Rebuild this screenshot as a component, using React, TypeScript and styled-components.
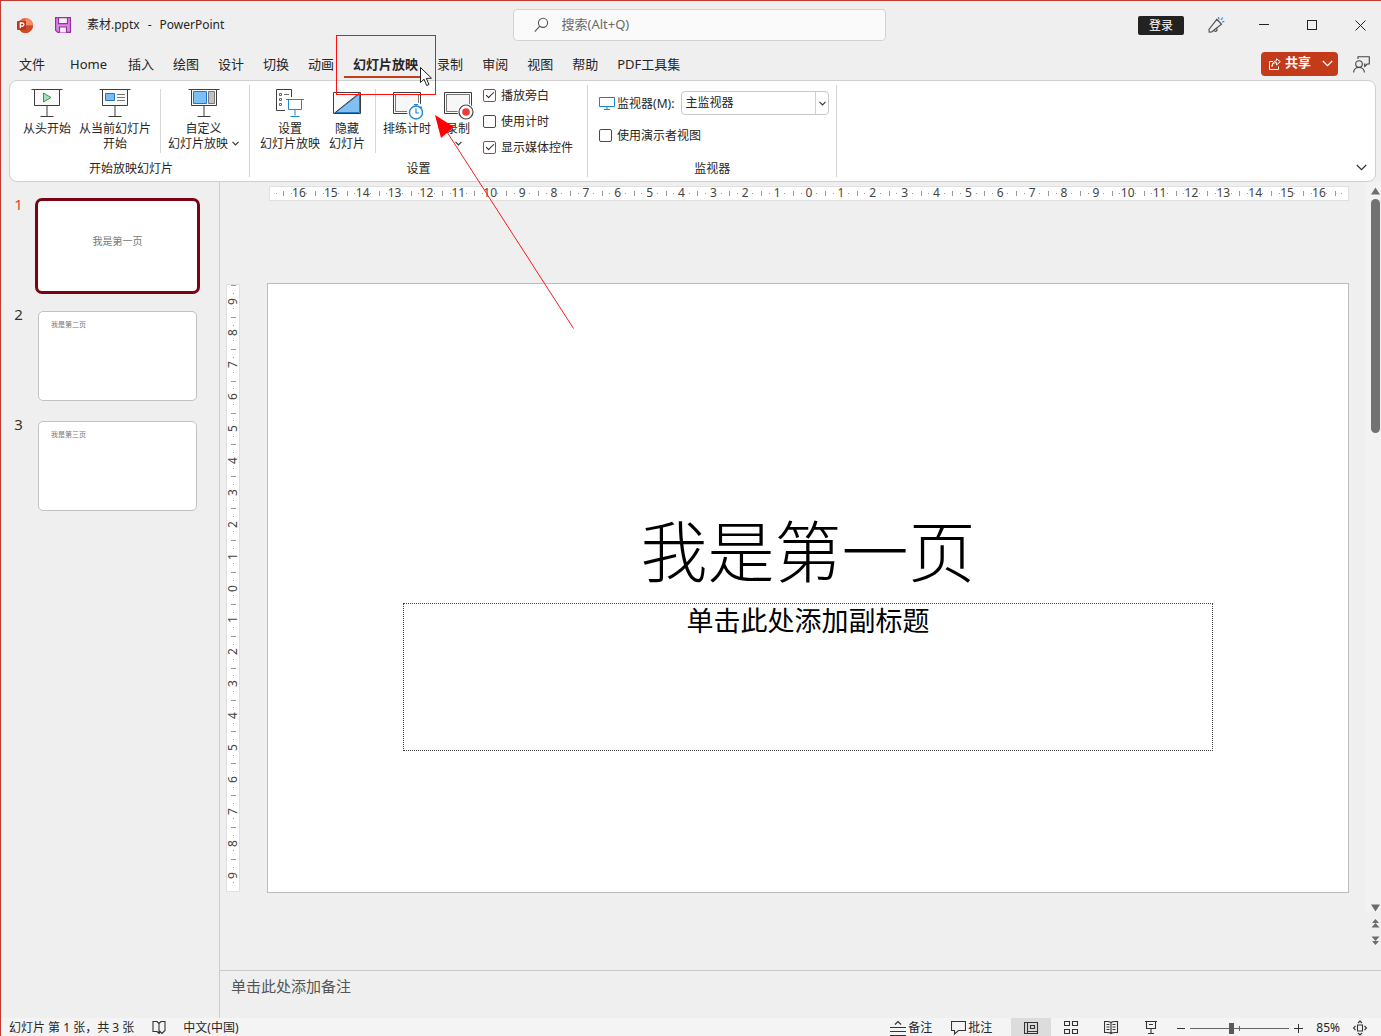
import React from "react";
import styled, { createGlobalStyle, css } from "styled-components";

const GlobalStyle = createGlobalStyle`
  *, *::before, *::after { box-sizing: border-box; }
  html, body { margin: 0; padding: 0; }
  body {
    font-family: "Noto Sans", "Noto Sans CJK SC", sans-serif;
    font-size: 12px;
    color: #262626;
    background: #efefef;
  }
  button, input, select, textarea { font: inherit; color: inherit; margin: 0; }
  button { border: 0; padding: 0; background: transparent; }
  svg { display: block; flex: none; }
`;

const AppWindow = styled.div`
  position: relative;
  display: flex;
  flex-direction: column;
  height: 100vh;
  overflow: hidden;
  border-top: 1px solid #c23b33;
  border-left: 1px solid #c23b33;
  background: #efefef;
`;

/* ---------- title bar ---------- */

const TitleBar = styled.header`
  display: grid;
  grid-template-columns: 1fr minmax(160px, 373px) 1fr;
  align-items: center;
  height: 48px;
  padding-left: 16px;
`;

const TitleLeft = styled.div`
  display: flex;
  align-items: center;
`;

const SaveButton = styled.button`
  margin: 0 16px 0 22px;
`;

const FileName = styled.h1`
  display: flex;
  gap: 8px;
  margin: 0;
  font-size: 12px;
  font-weight: 400;
  line-height: 20px;
`;

const SearchBox = styled.label`
  display: flex;
  align-items: center;
  gap: 13px;
  height: 32px;
  padding: 0 20px;
  border: 1px solid #d2d2d2;
  border-radius: 4px;
  background: #fafafa;
`;

const SearchInput = styled.input`
  flex: 1;
  min-width: 0;
  height: 24px;
  padding: 0 0 2px;
  border: 0;
  outline: 0;
  background: transparent;
  font-size: 13px;
  &::placeholder { color: #6a6a6a; opacity: 1; }
`;

const TitleRight = styled.div`
  display: flex;
  justify-content: flex-end;
  align-items: center;
  gap: 8px;
  padding-right: 1px;
`;

const LoginButton = styled.button`
  height: 19px;
  width: 46px;
  margin-right: 4px;
  border-radius: 2px;
  background: #222;
  color: #fff;
  font-size: 12px;
  line-height: 19px;
`;

const WindowButton = styled.button`
  display: grid;
  place-items: center;
  width: 40px;
  height: 32px;
`;

/* ---------- tabs ---------- */

const TabBar = styled.nav`
  display: flex;
  align-items: center;
  height: 31px;
  padding: 0 11px 0 9px;
`;

const TabList = styled.div`
  display: flex;
  flex: 1;
  gap: 1px;
`;

const Tab = styled.button<{ $active?: boolean; $extra?: number }>`
  height: 26px;
  padding: 0 9px;
  margin-right: ${(p) => p.$extra ?? 0}px;
  border-bottom: 2px solid ${(p) => (p.$active ? "#c43e1c" : "transparent")};
  font-size: 13px;
  line-height: 24px;
  font-weight: ${(p) => (p.$active ? 700 : 400)};
  white-space: nowrap;
`;

const ShareButton = styled.button`
  display: flex;
  align-items: center;
  height: 24px;
  width: 77px;
  margin-bottom: 2px;
  padding: 0 5px 0 8px;
  border-radius: 4px;
  background: #c43b1c;
  color: #fff;
  font-size: 13px;
  font-weight: 700;
  line-height: 20px;
`;

const ShareText = styled.span`
  flex: 1;
  padding: 0 0 4px 4px;
  text-align: left;
`;

const IconButton = styled.button`
  display: grid;
  place-items: center;
  margin-left: 15px;
`;

/* ---------- ribbon ---------- */

const Ribbon = styled.section`
  display: flex;
  height: 102px;
  flex: none;
  margin: 0 5px 0 8px;
  padding-left: 3px;
  border: 1px solid #cfcfcf;
  border-radius: 8px;
  background: #fff;
`;

const Group = styled.div`
  display: flex;
  flex-direction: column;
  justify-content: space-between;
  margin: 4px 0;
  padding: 0 7px;
  border-right: 1px solid #d4d4d4;
`;

const GroupBody = styled.div`
  display: flex;
  gap: 2px;
  height: 72px;
`;

const GroupLabel = styled.div`
  height: 16px;
  line-height: 16px;
  text-align: center;
`;

const ToolButton = styled.button`
  display: flex;
  flex-direction: column;
  align-items: center;
  min-width: 44px;
  padding: 4px 3px 0;
`;

const ToolText = styled.span`
  display: flex;
  align-items: center;
  gap: 4px;
  height: 15px;
  line-height: 15px;
  white-space: nowrap;
`;

const Divider = styled.span`
  width: 1px;
  margin: 4px 2px 4px 4px;
  background: #d8d8d8;
`;

const CheckList = styled.div`
  display: flex;
  flex-direction: column;
  height: 78px;
  margin-top: -3px;
  padding: 0 7px 0 1px;
`;

const CheckRow = styled.label`
  display: flex;
  align-items: center;
  gap: 5px;
  height: 26px;
  white-space: nowrap;
`;

const CheckBox = styled.input`
  appearance: none;
  display: grid;
  place-items: center;
  width: 13px;
  height: 13px;
  border: 1px solid #4a4a4a;
  border-radius: 2px;
  background: #fff;
  &:checked { border-color: #b5432a; }
  &:checked::after {
    content: "";
    width: 8px;
    height: 4px;
    margin-bottom: 3px;
    border-left: 1px solid #222;
    border-bottom: 1px solid #222;
    transform: rotate(-45deg);
  }
`;

const MonitorForm = styled.div`
  display: flex;
  flex-direction: column;
  gap: 6px;
  padding: 5px 0 0 4px;
`;

const MonitorRow = styled.div`
  display: flex;
  align-items: center;
  gap: 7px;
  height: 26px;
`;

const MonitorLabel = styled.label`
  display: flex;
  flex: 1;
  align-items: center;
  gap: 2px;
  white-space: nowrap;
`;

const SelectWrap = styled.span`
  display: grid;
  grid-template-columns: 134px 14px;
  align-items: stretch;
  height: 24px;
`;

const Select = styled.select`
  appearance: none;
  grid-area: 1 / 1 / 2 / 3;
  padding: 0 16px 2px 3px;
  border: 1px solid #c8c8c8;
  border-radius: 4px;
  background: #fff;
`;

const SelectArrow = styled.span`
  grid-area: 1 / 2 / 2 / 3;
  display: grid;
  place-items: center;
  margin: 1px 0;
  border-left: 1px solid #d0d0d0;
  pointer-events: none;
`;

const CollapseButton = styled.button`
  align-self: flex-end;
  margin: 0 8px 8px auto;
`;

/* ---------- workspace ---------- */

const Workspace = styled.main`
  display: flex;
  flex: 1;
  min-height: 0;
`;

const ThumbPane = styled.ol`
  flex: none;
  display: flex;
  flex-direction: column;
  gap: 20px;
  width: 219px;
  margin: 0;
  padding: 19px 0 0 12px;
  border-right: 1px solid #cdcdcd;
  list-style: none;
`;

const ThumbItem = styled.li<{ $selected?: boolean }>`
  display: flex;
  gap: 14px;
  color: ${(p) => (p.$selected ? "#d9472b" : "#333")};
`;

const ThumbNumber = styled.span`
  width: 11px;
  height: 6px;
  font-size: 15px;
  line-height: 6px;
  text-align: center;
`;

const Thumb = styled.button<{ $selected?: boolean; $cover?: boolean }>`
  display: flex;
  width: 159px;
  height: 90px;
  border-radius: 5px;
  background: #fff;
  color: #777;
  ${(p) =>
    p.$selected
      ? css`outline: 3px solid #7a0414; border-radius: 4px;`
      : css`border: 1px solid #c2c2c2;`}
  ${(p) =>
    p.$cover
      ? css`justify-content: center; padding: 32px 0 0; font-size: 10px; line-height: 16px;`
      : css`padding: 7px 12px 0; font-size: 7px; line-height: 12px;`}
`;

const MainColumn = styled.div`
  display: flex;
  flex: 1;
  flex-direction: column;
  min-width: 0;
`;

const Editor = styled.div`
  display: flex;
  flex: 1;
  min-height: 0;
`;

const Canvas = styled.div`
  flex: 1;
  min-width: 0;
  padding: 4px 17px 0 6px;
`;

const HRuler = styled.div`
  display: flex;
  height: 15px;
  margin: 0 0 0 43px;
  border: 1px solid #e0e0e0;
  background: #fff;
  color: #444;
`;

const mark = "linear-gradient(#999, #999)";

const HCell = styled.span`
  flex: 1;
  min-width: 0;
  text-align: center;
  line-height: 12px;
  background: ${mark} 0 50% / 1px 5px no-repeat, ${mark} 25% 50% / 1px 1px no-repeat,
    ${mark} 75% 50% / 1px 1px no-repeat;
`;

const HCap = styled.span<{ $end?: boolean }>`
  width: 13px;
  background: ${mark} 50% 50% / 1px 1px no-repeat
    ${(p) => (p.$end ? `, ${mark} 0 50% / 1px 5px no-repeat` : "")};
`;

const Stage = styled.div`
  display: flex;
  gap: 27px;
  padding-top: 82px;
`;

const VRuler = styled.div`
  display: flex;
  flex-direction: column;
  flex: none;
  width: 14px;
  margin: 1px 0;
  border: 1px solid #e0e0e0;
  background: #fff;
  color: #444;
`;

const VCell = styled.span`
  display: flex;
  flex: 1;
  align-items: center;
  justify-content: center;
  min-height: 0;
  background: ${mark} 50% 0 / 5px 1px no-repeat, ${mark} 50% 25% / 1px 1px no-repeat,
    ${mark} 50% 75% / 1px 1px no-repeat;
`;

const VNumber = styled.span`
  writing-mode: vertical-rl;
  transform: rotate(180deg);
  line-height: 12px;
`;

const Slide = styled.article`
  display: flex;
  flex: 1;
  flex-direction: column;
  align-items: center;
  aspect-ratio: 1082 / 610;
  border: 1px solid #bdbdbd;
  background: #fff;
  color: #000;
`;

const SlideTitle = styled.h2`
  margin: 0;
  padding-top: 217px;
  height: 319px;
  font-size: 67px;
  font-weight: 300;
  line-height: 100px;
`;

const Subtitle = styled.p`
  width: 75%;
  height: 148px;
  margin: 0;
  border: 1px dotted #444;
  font-size: 27px;
  line-height: 34px;
  text-align: center;
`;

const ScrollColumn = styled.div`
  display: flex;
  flex-direction: column;
`;

const ScrollBar = styled.div`
  display: flex;
  flex: none;
  flex-direction: column;
  align-items: flex-end;
  width: 15px;
  height: 730px;
  padding: 5px 1px 0 0;
  background: #f2f2f2;
`;

const ScrollThumb = styled.div`
  width: 9px;
  height: 234px;
  margin: 4px 0 auto;
  border-radius: 5px;
  background: #727272;
`;

const PageButtons = styled.div`
  display: flex;
  flex-direction: column;
  align-items: flex-end;
  gap: 8px;
  padding: 7px 1px 0 0;
`;

const Notes = styled.textarea`
  display: block;
  height: 48px;
  width: 100%;
  padding: 4px 11px;
  border: 0;
  border-top: 1px solid #cacaca;
  outline: 0;
  resize: none;
  background: #efefef;
  color: #555;
  font-size: 15px;
  line-height: 22px;
`;

/* ---------- status bar ---------- */

const StatusBar = styled.footer`
  display: flex;
  flex: none;
  align-items: flex-start;
  height: 18px;
  overflow: hidden;
  padding: 0 0 0 8px;
  background: #f4f4f4;
  white-space: nowrap;
`;

const StatusItem = styled.button<{ $space?: number }>`
  display: flex;
  flex: none;
  align-items: center;
  gap: 2px;
  height: 20px;
  margin-right: ${(p) => p.$space ?? 0}px;
  line-height: 20px;
`;

const StatusSpacer = styled.span`
  flex: 1;
`;

const ViewButton = styled.button<{ $active?: boolean }>`
  display: grid;
  place-items: center;
  flex: none;
  width: 40px;
  height: 20px;
  background: ${(p) => (p.$active ? "#dcdcdc" : "transparent")};
`;

const ZoomSlider = styled.input`
  appearance: none;
  width: 99px;
  height: 20px;
  margin: 0 5px;
  background: linear-gradient(#666, #666) 0 50% / 100% 1px no-repeat,
    linear-gradient(#666, #666) 50% 50% / 1px 5px no-repeat;
  &::-webkit-slider-thumb {
    appearance: none;
    width: 5px;
    height: 11px;
    background: #5a5a5a;
  }
`;

const Annotation = styled.svg`
  position: absolute;
  left: 0;
  top: 0;
  margin: -1px 0 0 -1px;
  pointer-events: none;
`;

/* ---------- icons ---------- */

const Chevron = ({ w = 8, color = "#333" }: { w?: number; color?: string }) => (
  <svg width={w} height={w} viewBox="0 0 8 8" fill="none" stroke={color} strokeWidth={w > 8 ? 0.9 : 1.3}>
    <path d="M0.6 2.2 4 5.6 7.4 2.2" />
  </svg>
);

const Tri = ({ up }: { up?: boolean }) => (
  <svg width="9" height="8" viewBox="0 0 9 8" fill="#6c6c6c">
    <path d={up ? "M4.5 0.5 9 7.5H0z" : "M4.5 7.5 9 0.5H0z"} />
  </svg>
);

const DoubleTri = ({ up }: { up?: boolean }) => (
  <svg width="9" height="9" viewBox="0 0 9 9" fill="#6c6c6c">
    {up ? <path d="M4.5 0 8 4H1zM4.5 4 8.5 8.5H.5z" /> : <path d="M4.5 5 8.5 .5H.5zM4.5 9 8 5H1z" />}
  </svg>
);

const PptLogo = () => (
  <svg width="16" height="17" viewBox="0 0 16 17">
    <circle cx="8.500" cy="8.500" r="7.500" fill="#e0633f" />
    <path d="M8.500 1a7.500 7.500 0 0 1 7.500 7.500H8.500z" fill="#f58a68" />
    <path d="M8.500 8.500H16a7.500 7.500 0 0 1-13 5z" fill="#cb4a28" />
    <rect x="0" y="4" width="9" height="9" rx="1" fill="#b7371a" />
    <path d="M3.300 11.300V6h2a1.600 1.600 0 0 1 0 3.200H3.500" fill="none" stroke="#fff" strokeWidth="1.300" />
  </svg>
);

const SaveIcon = () => (
  <svg width="16" height="16" viewBox="0 0 16 16" stroke="#9a2fa5" strokeWidth="1.200">
    <path d="M.6.6h14.800v14.800H2.800L.6 13.200z" fill="#d58be0" />
    <path d="M3.500.6h9v6h-9zM4.500 15.400V10h7v5.400" fill="#f8f0fa" />
  </svg>
);

const SearchIcon = () => (
  <svg width="15" height="16" viewBox="0 0 15 16" fill="none" stroke="#555" strokeWidth="1.100">
    <circle cx="9" cy="5.800" r="4.600" />
    <path d="M5.800 9.200.8 14.600" />
  </svg>
);

const PenIcon = () => (
  <svg width="18" height="18" viewBox="0 0 18 18" fill="none" stroke="#555" strokeWidth="1.200">
    <path d="M9.800 3.300 2 13.500l.2 2.500 2.600-.2 9.700-7.500zM9.800 3.300l4.700 5M7 14.500c1 1.500 3.500 1 3-2" />
    <path d="M12 3.500 11.500 1M14 4l1.800-2.500M15 6l2.300-.6" stroke="#2a8dd4" />
  </svg>
);

const MinIcon = () => (
  <svg width="10" height="10" viewBox="0 0 10 10" stroke="#222"><path d="M0 4.500h10" /></svg>
);
const MaxIcon = () => (
  <svg width="10" height="10" viewBox="0 0 10 10" fill="none" stroke="#222"><rect x=".5" y=".5" width="9" height="9" /></svg>
);
const CloseIcon = () => (
  <svg width="11" height="11" viewBox="0 0 11 11" stroke="#222"><path d="M.5.500l10 10M10.500.500l-10 10" /></svg>
);

const ShareIcon = () => (
  <svg width="12" height="12" viewBox="0 0 12 12" fill="none" stroke="#fff">
    <path d="M4 3.500H.5v8h9V8.500M3 8.500c.2-2.600 2-3.900 4.500-3.900V7L11.300 3.700 7.500.800v1.900C5 3 3.200 5 3 8.500z" />
  </svg>
);

const FeedbackIcon = () => (
  <svg width="17" height="17" viewBox="0 0 17 17" fill="none" stroke="#444" strokeWidth="1.100">
    <circle cx="6" cy="8" r="3.300" />
    <path d="M.6 16.500c.2-3 2-5 5.400-5s5.200 2 5.400 5M5 3V.7h11.300V8h-2.100l-2.400 2.500V8h-1" />
  </svg>
);

const ToolIcon = ({ children }: { children: React.ReactNode }) => (
  <svg width="32" height="32" viewBox="0 2 32 32" fill="none" stroke="#3d3d3d">
    {children}
  </svg>
);

const Projector = ({ children }: { children: React.ReactNode }) => (
  <ToolIcon>
    <path d="M.5 2.500h31M16 18.500v11M9.500 29.500h13" />
    <path d="M3.500 2.500h25v16h-25z" fill="#fafafa" />
    {children}
  </ToolIcon>
);

const FromStart = () => (
  <Projector><path d="M12.500 6v9l7.500-4.500z" fill="#a5dfb5" stroke="#2f9e4f" /></Projector>
);
const FromCurrent = () => (
  <Projector>
    <path d="M6.500 6.500h9v7h-9z" fill="#7cbcf0" stroke="#2277c4" />
    <path d="M18 7.500h8M18 10.500h8M18 13.500h8" stroke="#777" />
  </Projector>
);
const CustomShow = () => (
  <Projector>
    <path d="M5.500 4.500h13v12h-13z" fill="#7cc0f4" stroke="#2277c4" />
    <path d="M20.500 4.500h6v12h-6z" fill="#c5c2be" stroke="#777" />
  </Projector>
);
const SetupShow = () => (
  <ToolIcon>
    <path d="M17.500 10V2.500h-15v21H11" />
    <path d="M5.500 6.500h2v2h-2zM5.500 11.500h2v2h-2zM5.500 16.500h2v2h-2zM10 7.500h5" stroke="#666" />
    <path d="M12 12.500h18M14.500 12.500h13v10h-13zM21 22.500v6M16.500 29.500h9" stroke="#1e88cf" />
  </ToolIcon>
);
const HideSlide = () => (
  <ToolIcon>
    <path d="M2.500 5.500h27v21h-27z" fill="#fafafa" />
    <path d="M28.500 7v18.500h-24z" fill="#83c0f2" stroke="#1f78c4" />
    <path d="M3 26.500 29 5.500" />
  </ToolIcon>
);
const SlideFrame = ({ children }: { children: React.ReactNode }) => (
  <ToolIcon>
    <path d="M2.500 5.500h27v21h-27z" fill="#fff" />
    <path d="M4.500 7.500h23v17h-23z" fill="#f7f7f7" stroke="#777" />
    {children}
  </ToolIcon>
);
const Rehearse = () => (
  <SlideFrame>
    <circle cx="25" cy="24.500" r="9" fill="#fff" stroke="none" />
    <circle cx="25" cy="25.500" r="6.500" fill="#fff" stroke="#1e88cf" strokeWidth="1.400" />
    <path d="M25 21.500v4.500h3M23 17.500h4M25 17v2M29.500 19.500l1.500 1.500" stroke="#1e88cf" strokeWidth="1.200" />
  </SlideFrame>
);
const Record = () => (
  <SlideFrame>
    <circle cx="24" cy="25" r="8.500" fill="#fff" stroke="none" />
    <circle cx="24" cy="25" r="7" fill="#fff" stroke="#444" strokeWidth="1.200" />
    <circle cx="24" cy="25" r="3.800" fill="#ee3a36" stroke="none" />
  </SlideFrame>
);
const MonitorIcon = () => (
  <svg width="16" height="13" viewBox="0 0 16 13" fill="none" stroke="#1484d8">
    <path d="M.5.500h15v9H.5zM8 9.500v3M5 12.500h6" />
  </svg>
);

const statusIcons = {
  proof: "M7 3.500 5 1.500H1v10h4l2 2 1-1M7 3.500l2-2h4v9l-3 3-2.500-2.500M7 3.500v9",
  comment: "M.5 1.500h14v9H7.500L3.500 14v-3.500h-3z",
  normal: "M.5 2.500h13v11H.5zM3.500 2.500v11M3.500 11.500h10M6.500 5.500h4v3h-4z",
  sorter: "M.5 1.500h5v4h-5zM8.500 1.500h5v4h-5zM.5 9.500h5v4h-5zM8.500 9.500h5v4h-5z",
  reading: "M7 2.500C5 1 3 1.500.5 1.500v11c2.500 0 4.500-.5 6.500 1 2-1.500 4-1 6.500-1v-11C11 1.500 9 1 7 2.500zM7 2.500v11M2.500 4.500h3M2.500 7h3M2.500 9.500h3M8.500 4.500h3M8.500 7h3M8.500 9.500h3",
  show: "M1 1.500h12M2.500 1.500v7h9v-7M5 4.500h4M7 8.500v5M4 13.500h6",
  fit: "M4.500 5h5v6h-5zM5 3l2-2 2 2M5 13l2 2 2-2M2.500 6l-2 2 2 2M11.500 6l2 2-2 2",
};

const StatusIcon = ({ name }: { name: keyof typeof statusIcons }) => (
  <svg width="15" height="16" viewBox="0 0 15 16" fill="none" stroke="#333" strokeWidth="1.100">
    <path d={statusIcons[name]} />
  </svg>
);

const NotesIcon = () => (
  <svg width="16" height="16" viewBox="0 0 16 16" fill="none" stroke="#333" strokeWidth="1.200">
    <path d="M0 7.500h16M0 11.500h16M0 15.500h16M5 4.500l3-3 3 3" />
  </svg>
);

/* ---------- data ---------- */

const tabs: { name: string; extra?: number }[] = [
  { name: "文件", extra: 6 },
  { name: "Home", extra: 2 },
  ...["插入", "绘图", "设计", "切换", "动画", "幻灯片放映", "录制", "审阅", "视图", "帮助", "PDF工具集"].map((name) => ({ name })),
];
const thumbs = ["我是第一页", "我是第二页", "我是第三页"];
const span = (n: number) => Array.from({ length: n * 2 + 1 }, (_, i) => Math.abs(i - n));

const Tool = ({ icon, lines, menu }: { icon: React.ReactNode; lines: string[]; menu?: boolean }) => (
  <ToolButton type="button">
    {icon}
    {lines.map((line, i) => (
      <ToolText key={i}>
        {line}
        {menu && i === lines.length - 1 && <Chevron w={7} />}
      </ToolText>
    ))}
  </ToolButton>
);

const Check = ({ label, on }: { label: string; on?: boolean }) => (
  <CheckRow>
    <CheckBox type="checkbox" defaultChecked={on} />
    {label}
  </CheckRow>
);

export default function App() {
  return (
    <AppWindow>
      <GlobalStyle />
      <TitleBar>
        <TitleLeft>
          <PptLogo />
          <SaveButton type="button" aria-label="保存"><SaveIcon /></SaveButton>
          <FileName>
            <span>素材.pptx</span>
            <span>-</span>
            <span>PowerPoint</span>
          </FileName>
        </TitleLeft>
        <SearchBox>
          <SearchIcon />
          <SearchInput type="text" placeholder="搜索(Alt+Q)" />
        </SearchBox>
        <TitleRight>
          <LoginButton type="button">登录</LoginButton>
          <WindowButton type="button" aria-label="画笔"><PenIcon /></WindowButton>
          <WindowButton type="button" aria-label="最小化"><MinIcon /></WindowButton>
          <WindowButton type="button" aria-label="最大化"><MaxIcon /></WindowButton>
          <WindowButton type="button" aria-label="关闭"><CloseIcon /></WindowButton>
        </TitleRight>
      </TitleBar>

      <TabBar>
        <TabList>
          {tabs.map((t) => (
            <Tab key={t.name} type="button" $active={t.name === "幻灯片放映"} $extra={t.extra}>{t.name}</Tab>
          ))}
        </TabList>
        <ShareButton type="button">
          <ShareIcon />
          <ShareText>共享</ShareText>
          <Chevron w={11} color="#fff" />
        </ShareButton>
        <IconButton type="button" aria-label="反馈"><FeedbackIcon /></IconButton>
      </TabBar>

      <Ribbon>
        <Group>
          <GroupBody>
            <Tool icon={<FromStart />} lines={["从头开始"]} />
            <Tool icon={<FromCurrent />} lines={["从当前幻灯片", "开始"]} />
            <Divider />
            <Tool icon={<CustomShow />} lines={["自定义", "幻灯片放映"]} menu />
          </GroupBody>
          <GroupLabel>开始放映幻灯片</GroupLabel>
        </Group>
        <Group>
          <GroupBody>
            <Tool icon={<SetupShow />} lines={["设置", "幻灯片放映"]} />
            <Tool icon={<HideSlide />} lines={["隐藏", "幻灯片"]} />
            <Divider />
            <Tool icon={<Rehearse />} lines={["排练计时"]} />
            <Tool icon={<Record />} lines={["录制", ""]} menu />
            <CheckList>
              <Check label="播放旁白" on />
              <Check label="使用计时" />
              <Check label="显示媒体控件" on />
            </CheckList>
          </GroupBody>
          <GroupLabel>设置</GroupLabel>
        </Group>
        <Group>
          <GroupBody>
            <MonitorForm>
              <MonitorRow>
                <MonitorLabel htmlFor="monitor"><MonitorIcon />监视器(M):</MonitorLabel>
                <SelectWrap>
                  <Select id="monitor" defaultValue="main">
                    <option value="main">主监视器</option>
                  </Select>
                  <SelectArrow><Chevron w={7} /></SelectArrow>
                </SelectWrap>
              </MonitorRow>
              <Check label="使用演示者视图" />
            </MonitorForm>
          </GroupBody>
          <GroupLabel>监视器</GroupLabel>
        </Group>
        <CollapseButton type="button" aria-label="折叠功能区"><Chevron w={11} /></CollapseButton>
      </Ribbon>

      <Workspace>
        <ThumbPane>
          {thumbs.map((t, i) => (
            <ThumbItem key={t} $selected={i === 0}>
              <ThumbNumber>{i + 1}</ThumbNumber>
              <Thumb type="button" $selected={i === 0} $cover={i === 0}>{t}</Thumb>
            </ThumbItem>
          ))}
        </ThumbPane>

        <MainColumn>
          <Editor>
            <Canvas>
              <HRuler>
                <HCap />
                {span(16).map((n, i) => <HCell key={i}>{n}</HCell>)}
                <HCap $end />
              </HRuler>
              <Stage>
                <VRuler>
                  {span(9).map((n, i) => <VCell key={i}><VNumber>{n}</VNumber></VCell>)}
                </VRuler>
                <Slide>
                  <SlideTitle>我是第一页</SlideTitle>
                  <Subtitle>单击此处添加副标题</Subtitle>
                </Slide>
              </Stage>
            </Canvas>
            <ScrollColumn>
              <ScrollBar>
                <Tri up />
                <ScrollThumb />
                <Tri />
              </ScrollBar>
              <PageButtons>
                <DoubleTri up />
                <DoubleTri />
              </PageButtons>
            </ScrollColumn>
          </Editor>
          <Notes aria-label="备注" defaultValue="单击此处添加备注" />
        </MainColumn>
      </Workspace>

      <StatusBar>
        <StatusItem type="button" $space={18}>幻灯片 第 1 张，共 3 张</StatusItem>
        <StatusItem type="button" $space={16} aria-label="校对"><StatusIcon name="proof" /></StatusItem>
        <StatusItem type="button">中文(中国)</StatusItem>
        <StatusSpacer />
        <StatusItem type="button" $space={19}><NotesIcon />备注</StatusItem>
        <StatusItem type="button" $space={19}><StatusIcon name="comment" />批注</StatusItem>
        <ViewButton type="button" $active aria-label="普通"><StatusIcon name="normal" /></ViewButton>
        <ViewButton type="button" aria-label="幻灯片浏览"><StatusIcon name="sorter" /></ViewButton>
        <ViewButton type="button" aria-label="阅读视图"><StatusIcon name="reading" /></ViewButton>
        <ViewButton type="button" aria-label="放映"><StatusIcon name="show" /></ViewButton>
        <StatusItem type="button" aria-label="缩小">
          <svg width="14" height="9" viewBox="0 0 14 9" stroke="#333"><path d="M6 4.500h8" /></svg>
        </StatusItem>
        <ZoomSlider type="range" min={10} max={190} defaultValue={85} aria-label="缩放" />
        <StatusItem type="button" $space={13} aria-label="放大">
          <svg width="9" height="9" viewBox="0 0 9 9" stroke="#333"><path d="M0 4.500h9M4.500 0v9" /></svg>
        </StatusItem>
        <StatusItem type="button" $space={13}>85%</StatusItem>
        <StatusItem type="button" $space={13} aria-label="适应窗口"><StatusIcon name="fit" /></StatusItem>
      </StatusBar>

      <Annotation width="600" height="340" viewBox="0 0 600 340">
        <rect x="336.500" y="35.500" width="99" height="59" fill="none" stroke="#ff1010" />
        <path d="M447 132 573.500 328.500" stroke="#ff1a1a" />
        <path d="M435 115 454 127 441 138z" fill="#ff0000" />
        <path d="M420.500 67.500v15l3.500-3.300 2.700 6.300 2.300-1-2.700-6.100 5.200-.2z" fill="#fff" stroke="#222" />
      </Annotation>
    </AppWindow>
  );
}
